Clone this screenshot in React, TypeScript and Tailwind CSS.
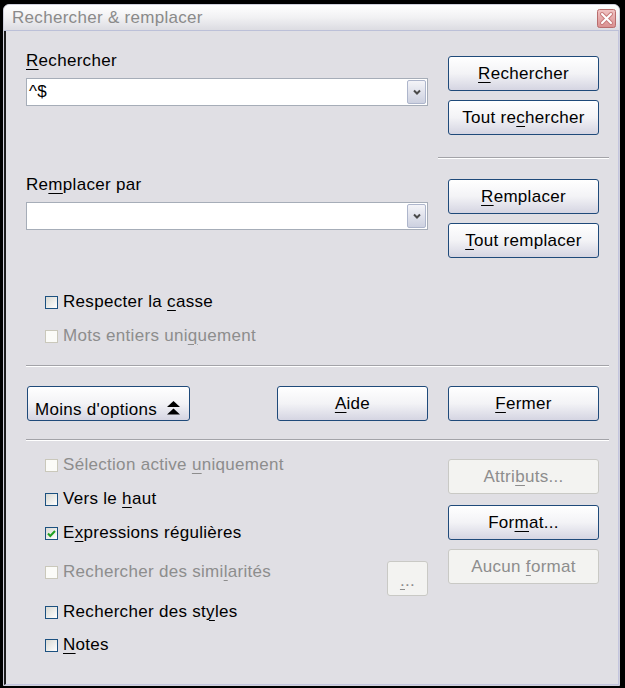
function Mn({ text, u }: { text: string; u?: number }) {
  if (u === undefined) return <span>{text}</span>;
  return (
    <span>
      {text.slice(0, u)}
      <span className="underline decoration-1 underline-offset-[3px]">{text[u]}</span>
      {text.slice(u + 1)}
    </span>
  );
}

function Btn({
  text,
  u,
  disabled = false,
  className = "",
}: {
  text: string;
  u?: number;
  disabled?: boolean;
  className?: string;
}) {
  return (
    <div
      className={`flex h-[35px] w-[151px] shrink-0 items-center justify-center rounded-[3px] border leading-[20px] ${
        disabled
          ? "border-[#c9c9c5] bg-[#f3f3f1] text-[#8d8d8d]"
          : "border-[#1f4a7a] bg-linear-to-b from-white via-[#f3f3f6] to-[#d5d5e2] text-black"
      } ${className}`}
    >
      <Mn text={text} u={u} />
    </div>
  );
}

function Combo({ value, className = "" }: { value: string; className?: string }) {
  return (
    <div className={`flex h-[28px] items-center border border-[#a6adb8] bg-white pl-[2px] pr-[1px] ${className}`}>
      <span className="flex-1 leading-[20px] text-black">{value}</span>
      <div className="flex h-[24px] w-[19px] items-center justify-center rounded-[2px] border border-[#aeb6cc] bg-linear-to-b from-[#f4f4f8] to-[#cdd1e0]">
        <svg width="8" height="6" viewBox="0 0 8 6">
          <polyline points="1,1.5 4,4.5 7,1.5" fill="none" stroke="#4a4a4a" strokeWidth="2" />
        </svg>
      </div>
    </div>
  );
}

function Check({
  text,
  u,
  checked = false,
  disabled = false,
}: {
  text: string;
  u?: number;
  checked?: boolean;
  disabled?: boolean;
}) {
  return (
    <div className="flex items-center gap-[5px]">
      <div
        className={`flex h-[13px] w-[13px] shrink-0 items-center justify-center border ${
          disabled
            ? "border-[#cac8bb] bg-[#fbfbf8]"
            : "border-[#1c5180] bg-linear-to-br from-[#d9d9d3] to-white"
        }`}
      >
        {checked && (
          <svg width="11" height="11" viewBox="0 0 11 11">
            <polyline points="2,5.5 4.3,8 9,3" fill="none" stroke="#21a121" strokeWidth="2" />
          </svg>
        )}
      </div>
      <span className={`leading-[20px] ${disabled ? "text-[#8d8d8d]" : "text-black"}`}>
        <Mn text={text} u={u} />
      </span>
    </div>
  );
}

function Sep({ className = "" }: { className?: string }) {
  return <div className={`h-[2px] border-t border-b border-t-[#a3a3a8] border-b-white ${className}`} />;
}

export default function App() {
  return (
    <div className="h-[688px] w-[625px] overflow-hidden bg-black pl-[3px] pt-[4px] font-['Liberation_Sans',Arial,sans-serif] text-[17px] tracking-[0.3px]">
      <div className="flex h-[682px] w-[617px] flex-col rounded-t-[6px] border border-[#cfd0dc] bg-[#e0dfe4]">
        {/* title bar */}
        <div className="flex h-[26px] shrink-0 items-center justify-between rounded-t-[5px] border-b border-[#bcc0d8] bg-linear-to-b from-white via-[#f1f1f3] to-[#dcdce2] pl-[8px] pr-[3px]">
          <span className="leading-[20px] text-[#8a8a8a]">Rechercher &amp; remplacer</span>
          <svg width="19" height="19" viewBox="0 0 19 19" className="mt-[2px]">
            <defs>
              <linearGradient id="cb" x1="0" y1="0" x2="0" y2="1">
                <stop offset="0" stopColor="#f1c4c4" />
                <stop offset="1" stopColor="#d98f8f" />
              </linearGradient>
            </defs>
            <rect x="0.5" y="0.5" width="18" height="18" rx="2" fill="url(#cb)" stroke="#b86d6d" />
            <path d="M5 5 L14 14 M14 5 L5 14" stroke="#c77a7a" strokeWidth="4" strokeLinecap="round" />
            <path d="M5 5 L14 14 M14 5 L5 14" stroke="#ffffff" strokeWidth="2" strokeLinecap="round" />
          </svg>
        </div>

        {/* body */}
        <div className="flex flex-1 flex-col border-b border-l-2 border-r border-b-[#c3c5de] border-l-[#1d1d1d] border-r-[#c3c5de] pl-[20px] pr-[19px] pt-[20px]">
          <div className="flex gap-[20px]">
            <div className="flex w-[402px] flex-col">
              <div className="h-[20px] leading-[20px] text-black">
                <Mn text="Rechercher" u={0} />
              </div>
              <Combo value="^$" className="mt-[7px]" />
              <div className="mt-[69px] h-[20px] leading-[20px] text-black">
                <Mn text="Remplacer par" u={2} />
              </div>
              <Combo value="" className="mt-[7px]" />
            </div>
            <div className="flex w-[151px] flex-col pt-[5px]">
              <Btn text="Rechercher" u={0} />
              <Btn text="Tout rechercher" u={7} className="mt-[9px]" />
              <Sep className="-mx-[10px] mt-[22px]" />
              <Btn text="Remplacer" u={0} className="mt-[20px]" />
              <Btn text="Tout remplacer" u={0} className="mt-[9px]" />
            </div>
          </div>

          <div className="mt-[27px] flex flex-col pl-[19px]">
            <div className="flex h-[34px] items-center">
              <Check text="Respecter la casse" u={13} />
            </div>
            <div className="flex h-[34px] items-center">
              <Check text="Mots entiers uniquement" u={16} disabled />
            </div>
          </div>

          <Sep className="-mr-[10px] mt-[12px]" />

          <div className="mt-[19px] flex items-start gap-[20px]">
            <div className="ml-[1px] flex h-[35px] w-[163px] items-center gap-[10px] rounded-[3px] border border-[#1f4a7a] bg-linear-to-b from-white via-[#f3f3f6] to-[#d5d5e2] pl-[7px] pt-[12px] leading-[20px] text-black">
              <span>Moins d'options</span>
              <svg width="13" height="14" viewBox="0 0 13 14" className="mt-[-4px]">
                <polygon points="6.5,0 13,6 0,6" fill="#000" />
                <polygon points="6.5,7.5 13,13.5 0,13.5" fill="#000" />
              </svg>
            </div>
            <div className="flex-1" />
            <Btn text="Aide" u={0} />
            <Btn text="Fermer" u={0} />
          </div>

          <Sep className="-mr-[10px] mt-[18px]" />

          <div className="mt-[7px] flex gap-[20px]">
            <div className="flex w-[402px] flex-col pl-[19px]">
              <div className="flex h-[34px] items-center">
                <Check text="Sélection active uniquement" u={17} disabled />
              </div>
              <div className="flex h-[34px] items-center">
                <Check text="Vers le haut" u={8} />
              </div>
              <div className="flex h-[34px] items-center">
                <Check text="Expressions régulières" u={1} checked />
              </div>
              <div className="mt-[11px] flex h-[35px] items-start justify-between">
                <div className="mt-[1px]">
                  <Check text="Rechercher des similarités" u={19} disabled />
                </div>
                <div className="flex h-[35px] w-[41px] items-center justify-center rounded-[3px] border border-[#c9c9c5] bg-[#f3f3f1] pt-[4px] leading-[20px] text-[#8d8d8d]">
                  <Mn text="..." u={0} />
                </div>
              </div>
              <div className="flex h-[32px] items-center">
                <Check text="Rechercher des styles" u={17} />
              </div>
              <div className="flex h-[34px] items-center">
                <Check text="Notes" u={0} />
              </div>
            </div>
            <div className="flex w-[151px] flex-col pt-[11px]">
              <Btn text="Attributs..." u={5} disabled className="h-[34px]" />
              <Btn text="Format..." u={3} className="mt-[11px]" />
              <Btn text="Aucun format" u={6} disabled className="mt-[9px] h-[34px]" />
            </div>
          </div>
        </div>
      </div>
    </div>
  );
}
